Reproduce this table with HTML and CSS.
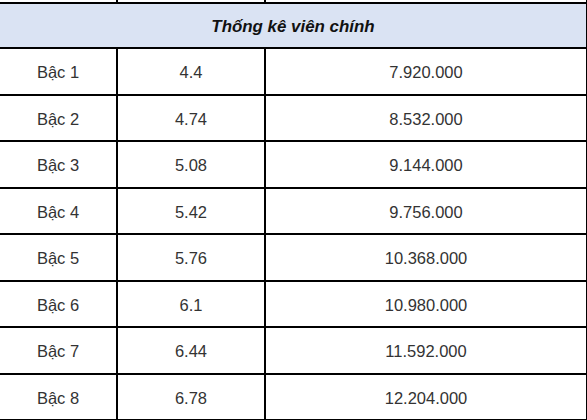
FILE: index.html
```html
<!DOCTYPE html>
<html lang="vi">
<head>
<meta charset="utf-8">
<title>Thống kê viên chính</title>
<link rel="stylesheet" href="styles.css">
</head>
<body>
<div class="viewport">
  <table class="salary">
    <colgroup>
      <col class="c1"><col class="c2"><col class="c3">
    </colgroup>
    <tbody>
      <tr class="prev"><td></td><td></td><td></td></tr>
      <tr class="head"><td colspan="3">Thống kê viên chính</td></tr>
      <tr><td>Bậc 1</td><td>4.4</td><td>7.920.000</td></tr>
      <tr><td>Bậc 2</td><td>4.74</td><td>8.532.000</td></tr>
      <tr><td>Bậc 3</td><td>5.08</td><td>9.144.000</td></tr>
      <tr><td>Bậc 4</td><td>5.42</td><td>9.756.000</td></tr>
      <tr><td>Bậc 5</td><td>5.76</td><td>10.368.000</td></tr>
      <tr><td>Bậc 6</td><td>6.1</td><td>10.980.000</td></tr>
      <tr><td>Bậc 7</td><td>6.44</td><td>11.592.000</td></tr>
      <tr><td>Bậc 8</td><td>6.78</td><td>12.204.000</td></tr>
    </tbody>
  </table>
</div>
</body>
</html>
```

FILE: styles.css
```css
html, body {
  margin: 0;
  padding: 0;
  background: #fff;
}
.viewport {
  width: 587px;
  height: 420px;
  overflow: hidden;
}
.salary {
  border-collapse: collapse;
  table-layout: fixed;
  width: 588px;
  margin-left: -2px;
  margin-top: -18px;
  font-family: "Liberation Sans", Arial, sans-serif;
  font-size: 16.5px;
  color: #333;
}
.c1 { width: 118px; }
.c2 { width: 148px; }
.c3 { width: 322px; }
.salary td {
  border: 2px solid #000;
  text-align: center;
  vertical-align: middle;
  padding: 3px 0 0 0;
  height: 46.5px;
  box-sizing: border-box;
}
.salary .prev td {
  height: 20px;
}
.salary .head td {
  background: #dae3f3;
  font-weight: bold;
  font-style: italic;
  font-size: 16.9px;
  color: #111;
  height: 45px;
}
```
